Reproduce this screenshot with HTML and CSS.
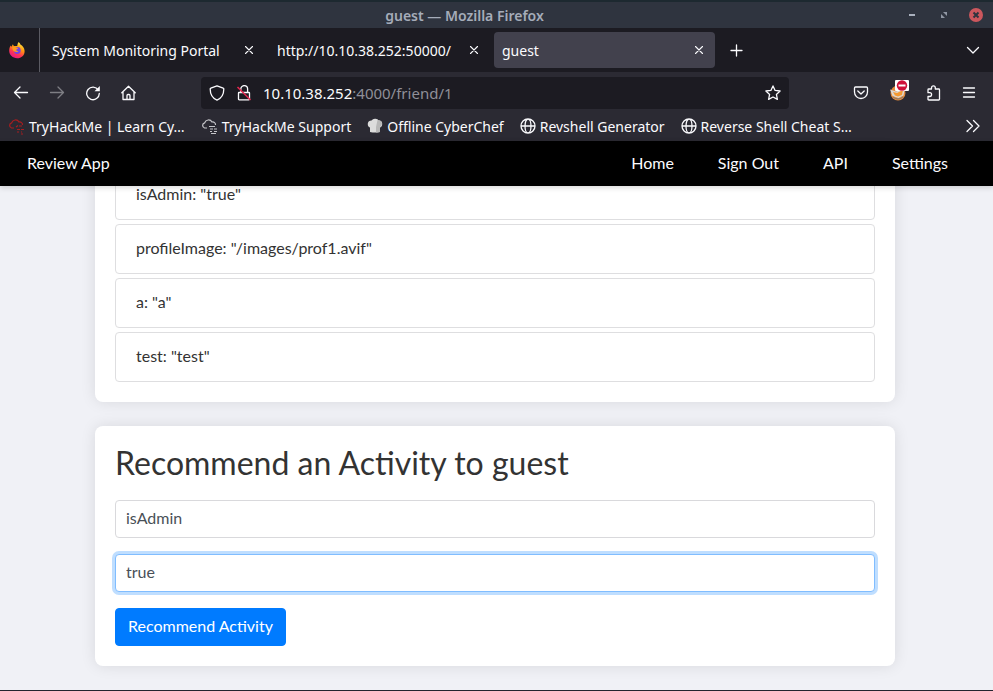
FILE: index.html
```html
<!DOCTYPE html>
<html lang="en">
<head>
<meta charset="utf-8">
<title>guest</title>
<link rel="stylesheet" href="styles.css">
</head>
<body>
<div class="titlebar">
  <span class="window-title">guest — Mozilla Firefox</span>
  <div class="window-controls">
    <button class="plain" aria-label="Minimize"><svg width="14" height="14" viewBox="0 0 14 14"><path d="M4 7h6" stroke="#a9b0bd" stroke-width="2"/></svg></button>
    <button class="plain" aria-label="Restore"><svg width="14" height="14" viewBox="0 0 14 14" fill="#8f96a3"><path d="M6 4h4v4zM4 6v4h4z"/></svg></button>
    <button class="plain" aria-label="Close window"><svg width="14" height="14" viewBox="0 0 14 14"><circle cx="7" cy="7" r="7" fill="#cc575d"/><path d="M4.500 4.500l5 5m0-5l-5 5" stroke="#2f343f" stroke-width="2"/></svg></button>
  </div>
</div>

<div class="tabbar">
  <div class="pinned">
    <svg width="18" height="18" viewBox="0 0 18 18">
      <defs>
        <linearGradient id="flame" x1=".8" y1="0" x2=".3" y2="1"><stop offset="0" stop-color="#fff44f"/><stop offset=".4" stop-color="#ff980e"/><stop offset=".7" stop-color="#ff3750"/><stop offset="1" stop-color="#e8158c"/></linearGradient>
      </defs>
      <path d="M10.600 1c1 .8 1.700 1.700 2 2.700 1.700.8 3.900 3 4 6.200.2 4.200-3.200 7.300-7.500 7.300S1.200 13.900 1.200 9.800c0-1.800.4-3.900 1.500-5.400l.7 1.300 1.500-2.500.9 1.700 3.400.1c.2-1.500.6-2.900 1.400-4z" fill="url(#flame)"/>
      <circle cx="9.300" cy="9.500" r="3.400" fill="#7542e5"/>
      <path d="M4.200 6.200c1.500-.8 3-.6 4.200.3l1.900.5c-.3 1-1.600 1.100-2 1.700-.2 1 .9 1.500 2.100 1.200-.9 1.300-2.700 1.500-4.100.7-1.200-.8-1.900-2.300-2.100-4.400z" fill="#ff9a1f"/>
    </svg>
  </div>
  <div class="tab tab-first"><span>System Monitoring Portal</span><button class="plain" aria-label="Close tab"><svg width="10" height="10" viewBox="0 0 10 10"><path d="M1.500 1.500l7 7m0-7l-7 7" class="line thin"/></svg></button></div>
  <div class="tab tab-second"><span>http://10.10.38.252:50000/</span><button class="plain" aria-label="Close tab"><svg width="10" height="10" viewBox="0 0 10 10"><path d="M1.500 1.500l7 7m0-7l-7 7" class="line thin"/></svg></button></div>
  <div class="tab tab-active"><span>guest</span><button class="plain" aria-label="Close tab"><svg width="10" height="10" viewBox="0 0 10 10"><path d="M1.500 1.500l7 7m0-7l-7 7" class="line thin"/></svg></button></div>
  <button class="plain new-tab" aria-label="New tab"><svg width="13" height="13" viewBox="0 0 13 13"><path d="M6.500 1v11M1 6.500h11" class="line"/></svg></button>
  <button class="plain list-tabs" aria-label="List all tabs"><svg width="14" height="14" viewBox="0 0 14 14"><path d="M1.500 4.500L7 10l5.500-5.500" class="line"/></svg></button>
</div>

<div class="toolbar">
  <div class="nav-buttons">
    <button class="plain" aria-label="Back"><svg width="16" height="16" viewBox="0 0 16 16"><path d="M14.500 7.500H1.500M7 2L1.500 7.500 7 13" class="line"/></svg></button>
    <button class="plain dim" aria-label="Forward"><svg width="16" height="16" viewBox="0 0 16 16"><path d="M1.500 7.500h13M9 2l5.500 5.500L9 13" class="line"/></svg></button>
    <button class="plain" aria-label="Reload"><svg width="16" height="16" viewBox="0 0 16 16"><path d="M13.300 5A6.300 6.300 0 1 0 14.300 8.500" class="line"/><path d="M14.800 1v5.300H9.500z" fill="#fbfbfe"/></svg></button>
    <button class="plain" aria-label="Home"><svg width="16" height="16" viewBox="0 0 16 16"><path d="M.8 7.800l6.700-6.500 6.700 6.500M2 7v7.500h11V7M6 14.500v-4q0-1 1-1h1q1 0 1 1v4" class="line"/></svg></button>
  </div>
  <div class="address">
    <svg width="16" height="16" viewBox="0 0 16 16"><path d="M8 .8l6.200 2.300q.6.200.6 1C14.800 9 12.500 13.300 8 15.200 3.500 13.300 1.200 9 1.200 4.100q0-.8.6-1z" class="line"/></svg>
    <svg width="16" height="16" viewBox="0 0 16 16"><path d="M4.800 7V4a3.400 3.400 0 0 1 6.800 0v3M3 7.500h10q.5 0 .5.500v6q0 .8-.8.8H3.300q-.8 0-.8-.8V8q0-.5.500-.5z" class="line"/><path d="M1.500 2l13 13" stroke="#e22850" stroke-width="1.600"/></svg>
    <a class="url" href="#"><span class="host">10.10.38.252</span>:4000/friend/1</a>
    <button class="plain" aria-label="Bookmark this page"><svg width="16" height="16" viewBox="0 0 16 16"><path d="M8 .9l2.100 4.500 5 .6-3.700 3.400 1 5L8 12l-4.400 2.400 1-5L.9 6l5-.6z" class="line"/></svg></button>
  </div>
  <div class="tools">
    <button class="plain" aria-label="Pocket"><svg width="16" height="16" viewBox="0 0 16 16"><path d="M2.500 2h11q1 0 1 1v4a6.500 6.500 0 0 1-13 0V3q0-1 1-1zM4.800 6L8 9l3.200-3" class="line"/></svg></button>
    <button class="plain proxy" aria-label="FoxyProxy"><svg width="20" height="22" viewBox="0 0 20 22">
      <circle cx="9" cy="13" r="7.500" fill="#e48b3c"/><path d="M1 9.500l6 2 9-4-1.500 8-5 2.500-6-2z" fill="#ddd8d0"/><path d="M4 12l4 1 6-3-1 5-4 1.500-3-1z" fill="#f49a32"/><path d="M4 17q5 4 10 0" stroke="#7a7874" stroke-width="1" fill="none"/>
      <rect x="6" y="0" width="14" height="11" rx="1" fill="#fff"/><circle cx="13" cy="5.500" r="5.200" fill="#cf1038"/><path d="M9.500 5.500h7" stroke="#fff" stroke-width="2"/>
    </svg></button>
    <button class="plain" aria-label="Extensions"><svg width="16" height="16" viewBox="0 0 16 16"><path d="M2 7V4.800q0-.8.800-.8h2.700V2.800a1.900 1.900 0 0 1 3.800 0V4h3.400q.8 0 .8.800v9.400q0 .8-.8.800H2.800q-.8 0-.8-.8V11.500h1.700a1.900 1.900 0 0 0 0-3.800H2z" class="line"/></svg></button>
    <button class="plain" aria-label="Menu"><svg width="14" height="14" viewBox="0 0 14 14"><path d="M1.500 2h11M1.500 6.500h11M1.500 11h11" class="line"/></svg></button>
  </div>
</div>

<nav class="bookmarks">
  <a href="#"><svg width="17" height="17" viewBox="0 0 17 17"><g class="cloud red"><path d="M6 10H3.500A2.700 2.700 0 0 1 3.700 4.800 4 4 0 0 1 11 4a2.800 2.800 0 0 1 3.500 3M8 9l2-1.500M11 8h3M9 11.500h3m1 0h3M9 14h2m2 0h1m-1 2h2"/></g></svg><span>TryHackMe | Learn Cy…</span></a>
  <a href="#"><svg width="17" height="17" viewBox="0 0 17 17"><g class="cloud"><path d="M6 10H3.500A2.700 2.700 0 0 1 3.700 4.800 4 4 0 0 1 11 4a2.800 2.800 0 0 1 3.500 3M8 8.500h6M9 11h3m1 0h3M9 13.500h2m2 0h3m-6 2h5"/></g></svg><span>TryHackMe Support</span></a>
  <a href="#"><svg width="16" height="16" viewBox="0 0 16 16"><path d="M3 14V9.500Q.5 8.500.8 5.500 1.200 2.500 4.500 2.500 6 .5 8.500.8T11.500 2.500q3.500-.2 3.700 3T13 9.500V14q-5 1-10 0z" fill="#dcdcdc"/><path d="M9 9l1.500-7q4.500 0 4.500 4l-2 3.500V14l-4 .5z" fill="#b8b8b8"/></svg><span>Offline CyberChef</span></a>
  <a href="#"><svg width="16" height="16" viewBox="0 0 16 16"><path d="M1 8a7 7 0 1 0 14 0A7 7 0 1 0 1 8zM5 8a3 7 0 1 0 6 0A3 7 0 1 0 5 8zM1 8h14" class="line"/></svg><span>Revshell Generator</span></a>
  <a href="#"><svg width="16" height="16" viewBox="0 0 16 16"><path d="M1 8a7 7 0 1 0 14 0A7 7 0 1 0 1 8zM5 8a3 7 0 1 0 6 0A3 7 0 1 0 5 8zM1 8h14" class="line"/></svg><span>Reverse Shell Cheat S…</span></a>
  <button class="plain more" aria-label="More bookmarks"><svg width="14" height="14" viewBox="0 0 14 14"><path d="M1 1.500L6.500 7 1 12.500M7.500 1.500L13 7l-5.500 5.500" class="line"/></svg></button>
</nav>

<header class="app-header">
  <a href="#">Review App</a>
  <nav class="app-nav">
    <a href="#">Home</a>
    <a href="#">Sign Out</a>
    <a href="#">API</a>
    <a href="#">Settings</a>
  </nav>
</header>

<main class="content">
  <section class="card">
    <ul class="details">
      <li>isAdmin: "true"</li>
      <li>profileImage: "/images/prof1.avif"</li>
      <li>a: "a"</li>
      <li>test: "test"</li>
    </ul>
  </section>
  <section class="card">
    <h2>Recommend an Activity to guest</h2>
    <form class="activity">
      <input type="text" aria-label="Activity type" value="isAdmin">
      <input type="text" class="focused" aria-label="Activity name" value="true">
      <button type="button">Recommend Activity</button>
    </form>
  </section>
</main>
</body>
</html>
```
FILE: styles.css
```css
* { box-sizing: border-box; }

body {
  margin: 0;
  height: 100vh;
  display: flex;
  flex-direction: column;
  overflow: hidden;
  background: #f0f1f6;
  border-bottom: 1px solid #23252f;
  font-family: "Noto Sans", "Open Sans", sans-serif;
  font-size: 14px;
  color: #fbfbfe;
}

a { color: inherit; text-decoration: none; }
svg { display: block; flex: none; }
.line { fill: none; stroke: #fbfbfe; stroke-width: 1.3; stroke-linejoin: round; stroke-linecap: round; }
.thin { stroke-width: 1.1; }

.plain {
  display: block;
  padding: 0;
  border: 0;
  background: none;
}

.titlebar {
  display: grid;
  grid-template-columns: 1fr auto 1fr;
  align-items: center;
  flex: none;
  height: 28px;
  padding: 0 10px;
  border-top: 2px solid #1d2930;
  background: #2f343f;
}
.window-title { grid-column: 2; padding-right: 64px; font-weight: 600; color: #a5acb9; }
.window-controls { display: flex; gap: 18px; justify-content: flex-end; }

.tabbar {
  display: flex;
  align-items: center;
  flex: none;
  height: 44px;
  background: #1c1b22;
}
.pinned {
  display: flex;
  align-items: center;
  align-self: stretch;
  width: 40px;
  padding-left: 8px;
  border-right: 1px solid #5b5b63;
}
.tab {
  display: flex;
  align-items: center;
  justify-content: space-between;
  height: 36px;
  padding: 0 12px;
  white-space: nowrap;
}
.tab-first { width: 225px; padding-right: 11px; }
.tab-second { width: 226px; }
.tab-active {
  width: 221px;
  margin-left: 3px;
  padding: 0 11px 0 8px;
  border-radius: 4px;
  background: #42414d;
}
.new-tab { margin-left: 15px; }
.list-tabs { margin: 0 13px 0 auto; }

.toolbar {
  display: flex;
  align-items: center;
  flex: none;
  height: 41px;
  background: #2b2a33;
}
.nav-buttons { display: flex; gap: 20px; width: 201px; padding-left: 13px; }
.dim { opacity: .4; }
.address {
  display: flex;
  align-items: center;
  gap: 11px;
  flex: 1;
  height: 32px;
  padding: 0 8px;
  border-radius: 4px;
  background: #1c1b22;
}
.url { flex: 1; font-size: 15px; color: #8f8f98; }
.host { color: #fbfbfe; }
.tools { display: flex; align-items: center; gap: 20px; padding: 0 17px 0 64px; }
.proxy { width: 17px; margin-bottom: 4px; }

.bookmarks {
  display: flex;
  align-items: center;
  gap: 16px;
  flex: none;
  height: 28px;
  padding: 0 13px 2px 8px;
  background: #2b2a33;
  white-space: nowrap;
}
.bookmarks a { display: flex; align-items: center; gap: 4px; }
.more { margin-left: auto; }
.cloud { fill: none; stroke: #c4c4c8; stroke-width: 1.2; }
.red { stroke: #a81d20; }

.app-header, .content { font-family: Lato, Carlito, sans-serif; font-size: 16px; }

.app-header {
  position: relative;
  z-index: 1;
  display: flex;
  align-items: center;
  justify-content: space-between;
  flex: none;
  height: 45px;
  padding: 0 45px 2px 27px;
  background: #000;
  box-shadow: 0 2px 5px rgba(0, 0, 0, .15);
}
.app-nav { display: flex; gap: 44px; }

.content {
  display: flex;
  flex-direction: column;
  justify-content: flex-end;
  align-items: center;
  gap: 24px;
  flex: 1;
  min-height: 0;
  padding: 0 3px 24px 0;
  color: #333;
}
.card {
  flex: none;
  width: 100%;
  max-width: 800px;
  padding: 20px;
  border-radius: 8px;
  background: #fff;
  box-shadow: 0 0 15px rgba(0, 0, 0, .1);
}
.details { display: grid; gap: 4px; margin: 0; padding: 0; list-style: none; }
.details li {
  height: 50px;
  padding: 0 20px;
  border: 1px solid #dedee0;
  border-radius: 4px;
  line-height: 46px;
}
h2 { margin: 0 0 20px; font-size: 32px; font-weight: 400; line-height: 34px; }

.activity { display: grid; gap: 16px; justify-items: start; }
.activity input, .activity button {
  height: 38px;
  border: 1px solid #d9d9dc;
  border-radius: 4px;
  font: inherit;
}
.activity input { width: 100%; padding: 0 10px 3px; color: #495057; background: #fff; outline: 0; }
.activity .focused { border-color: #80bdff; box-shadow: 0 0 0 3px #bfdeff; }
.activity button { padding: 0 12px 3px; border-color: #007bff; background: #007bff; color: #fff; }
```
